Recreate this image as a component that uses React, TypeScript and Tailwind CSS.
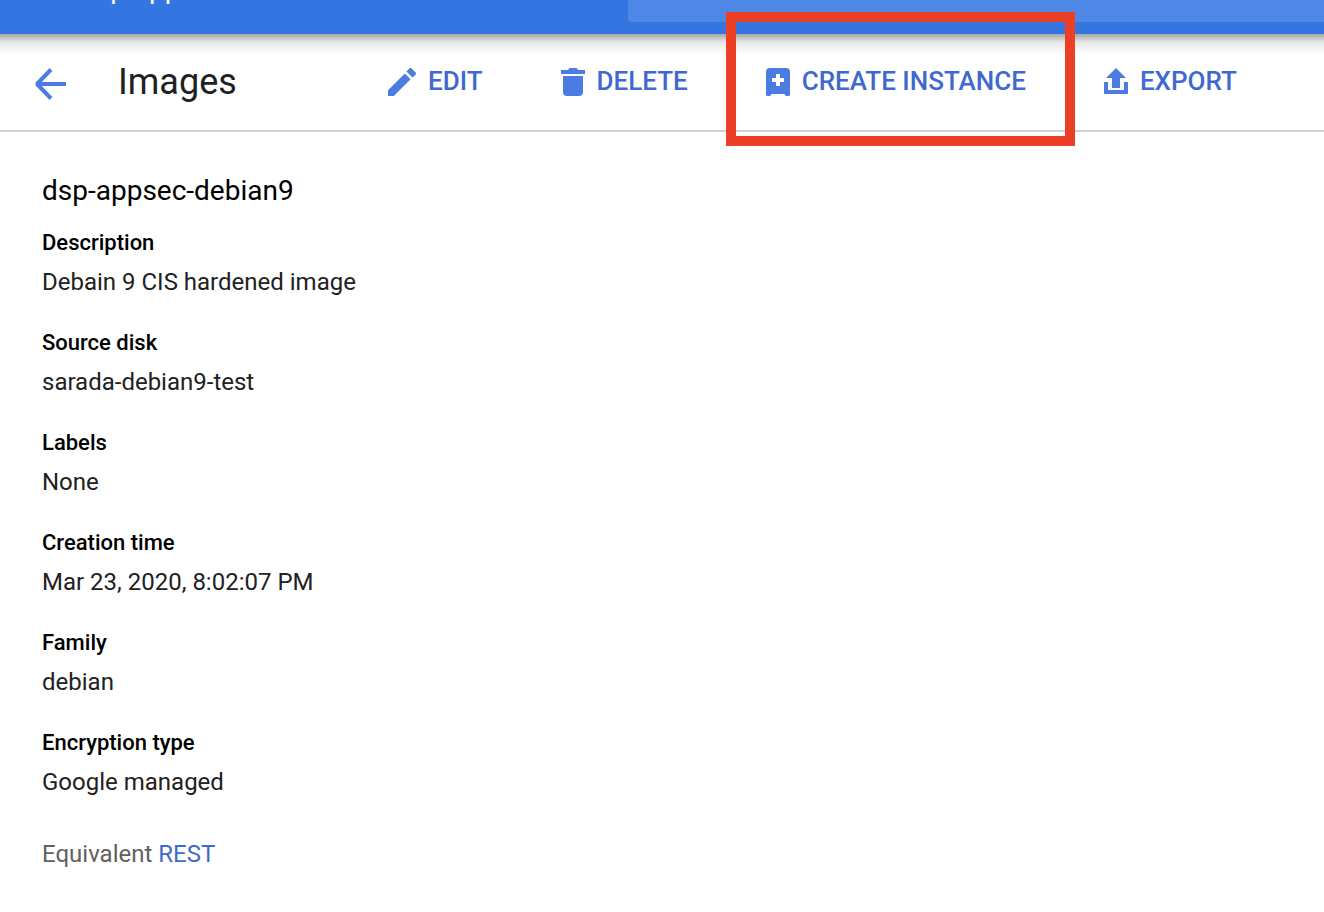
import type { ReactNode } from "react";

const fields = [
  { label: "Description", value: "Debain 9 CIS hardened image" },
  { label: "Source disk", value: "sarada-debian9-test" },
  { label: "Labels", value: "None" },
  { label: "Creation time", value: "Mar 23, 2020, 8:02:07 PM" },
  { label: "Family", value: "debian" },
  { label: "Encryption type", value: "Google managed" },
];

function BackIcon() {
  return (
    <svg width="32" height="32" viewBox="0 0 32 32" fill="none" stroke="#4a7ce2" strokeWidth="4" aria-hidden="true">
      <path d="M32 16H4M17 1.500L3 16L17 30.500" strokeLinejoin="bevel" />
    </svg>
  );
}

function EditIcon() {
  return (
    <svg width="28" height="28" viewBox="0 0 28 28" fill="#4a7ce2" aria-hidden="true">
      <path d="M0 22.170V28H5.830L22.600 11.200L16.800 5.400ZM27.550 6.660a1.540 1.540 0 0 0 0-2.190L23.530.45a1.540 1.540 0 0 0-2.190 0L18.500 3.600L24.400 9.500Z" />
    </svg>
  );
}

function DeleteIcon() {
  return (
    <svg width="24" height="28" viewBox="0 0 24 28" fill="#4a7ce2" aria-hidden="true">
      <path d="M0 2H7L8.500 0H15.500L17 2H24V6H0ZM2 8H22V24a4 4 0 0 1-4 4H6a4 4 0 0 1-4-4Z" />
    </svg>
  );
}

function InstanceIcon() {
  return (
    <svg width="24" height="28" viewBox="0 0 24 28" fill="#4a7ce2" fillRule="evenodd" aria-hidden="true">
      <path d="M4 0H20a4 4 0 0 1 4 4V26.500Q24 28 22.500 28H20.500Q19 28 18.500 26H5.500Q5 28 3.500 28H1.500Q0 28 0 26.500V4a4 4 0 0 1 4-4ZM10 6V10H6V14H10V18H14V14H18V10H14V6Z" />
    </svg>
  );
}

function ExportIcon() {
  return (
    <svg width="24" height="28" viewBox="0 0 24 28" fill="#4a7ce2" aria-hidden="true">
      <path d="M12 0L22 10H16V20H8V10H2ZM0 14H4V22H20V14H24V26H0Z" />
    </svg>
  );
}

function Action({ icon, label, highlighted = false }: { icon: ReactNode; label: string; highlighted?: boolean }) {
  return (
    <button type="button" className="relative flex shrink-0 items-center gap-3 whitespace-nowrap text-[26px] leading-8 font-medium text-[#3f69cf]">
      {icon}
      <span className="pb-0.5">{label}</span>
      {highlighted && <span className="pointer-events-none absolute -top-[53px] -right-[49px] -bottom-[47px] -left-10 z-20 border-10 border-[#eb4026]" />}
    </button>
  );
}

export default function App() {
  return (
    <div className="min-h-screen bg-white font-[Roboto,sans-serif] text-[#212121]">
      <header className="relative z-10 flex h-[34px] items-start overflow-hidden bg-[#3575e1] pl-20 text-white">
        <div className="-mt-[27px] w-[548px] shrink-0 text-[28px] leading-8">dsp-appsec</div>
        <div className="h-[22px] flex-1 rounded-bl bg-[#4f87e6]" />
      </header>
      <div className="relative z-20 flex h-[98px] items-center border-b-2 border-[#d2d2d2] pl-[34px]">
        <div className="pointer-events-none absolute inset-x-0 top-0 h-5 bg-linear-to-b from-black/35 via-black/10 via-40% to-transparent" />
        <button type="button" aria-label="Back" className="shrink-0 pt-1">
          <BackIcon />
        </button>
        <h1 className="ml-[52px] w-[270px] shrink-0 text-[36px] leading-10">Images</h1>
        <div className="flex items-center gap-[78px]">
          <Action icon={<EditIcon />} label="EDIT" />
          <Action icon={<DeleteIcon />} label="DELETE" />
          <Action icon={<InstanceIcon />} label="CREATE INSTANCE" highlighted />
          <Action icon={<ExportIcon />} label="EXPORT" />
        </div>
      </div>
      <main className="px-[42px] pt-[41px]">
        <h2 className="text-[28px] leading-9 text-black">dsp-appsec-debian9</h2>
        <dl className="mt-5 flex flex-col gap-[31px]">
          {fields.map((field) => (
            <div key={field.label}>
              <dt className="text-[22px] leading-7 font-medium text-black">{field.label}</dt>
              <dd className="mt-[9px] text-2xl leading-8">{field.value}</dd>
            </div>
          ))}
        </dl>
        <p className="mt-10 text-2xl leading-8 text-[#616161]">
          Equivalent <a href="#rest" className="text-[#3f69cf]">REST</a>
        </p>
      </main>
    </div>
  );
}
